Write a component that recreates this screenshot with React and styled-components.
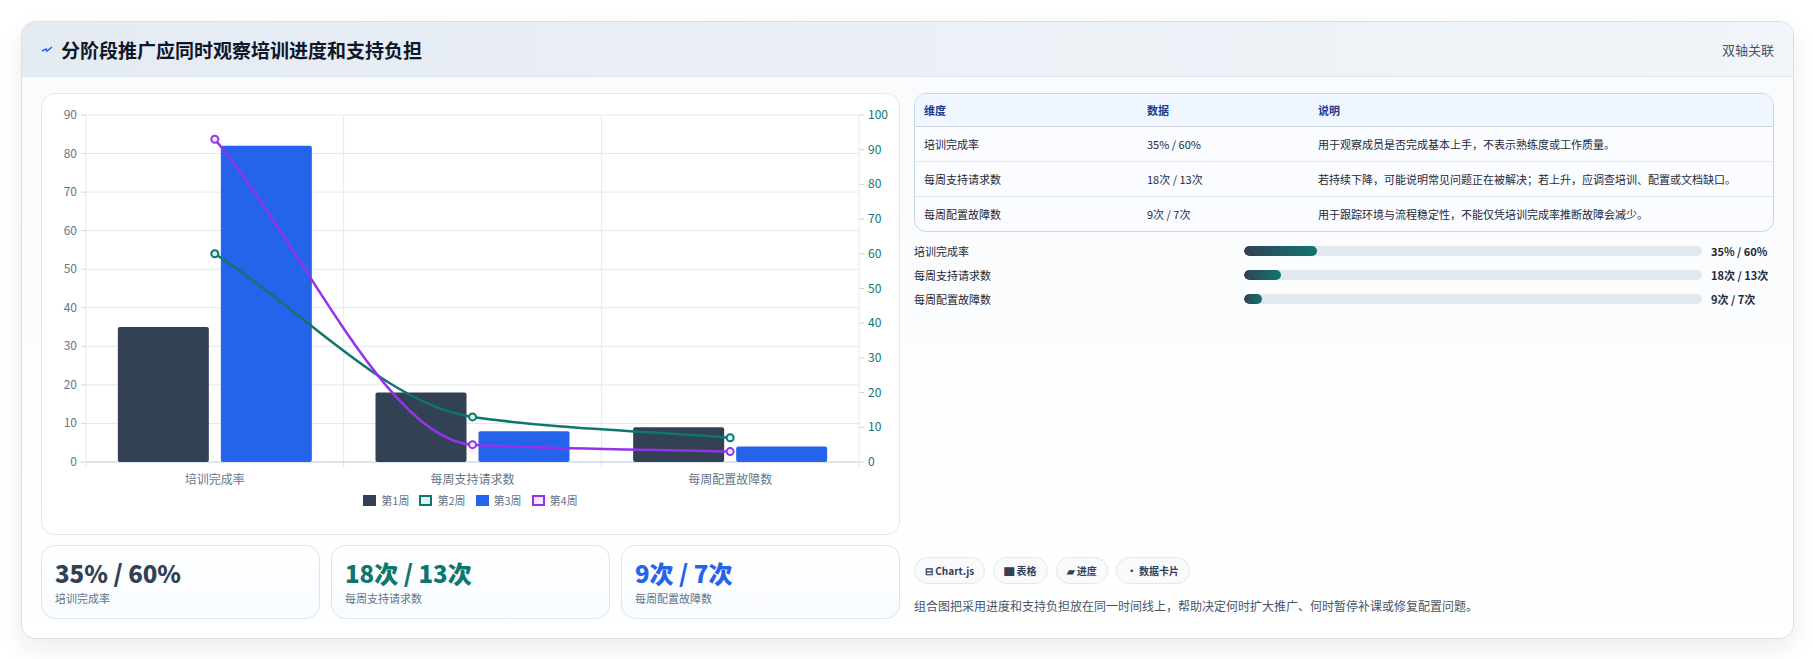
import React from 'react'
import styled, { createGlobalStyle } from 'styled-components'

const GlobalStyle = createGlobalStyle`
  body {
    margin: 0;
    background: #ffffff;
    font-family: "Noto Sans CJK SC", "Noto Sans", sans-serif;
    color: #1e293b;
  }
`

const left = { max: 90, ticks: [0, 10, 20, 30, 40, 50, 60, 70, 80, 90] }
const right = { max: 100, ticks: [0, 10, 20, 30, 40, 50, 60, 70, 80, 90, 100] }
const cats = ['培训完成率', '每周支持请求数', '每周配置故障数']
const week1 = [35, 18, 9]
const week3 = [82, 8, 4]
const week2 = [60, 13, 7]
const week4 = [93, 5, 3]

const rows = [
  { name: '培训完成率', value: '35% / 60%', note: '用于观察成员是否完成基本上手，不表示熟练度或工作质量。', pct: 16 },
  { name: '每周支持请求数', value: '18次 / 13次', note: '若持续下降，可能说明常见问题正在被解决；若上升，应调查培训、配置或文档缺口。', pct: 8 },
  { name: '每周配置故障数', value: '9次 / 7次', note: '用于跟踪环境与流程稳定性，不能仅凭培训完成率推断故障会减少。', pct: 4 },
]

const PL = 44
const PR = 817
const PT = 21
const PB = 368
const W = (PR - PL) / 3
const cx = (i) => PL + W * i + W / 2
const yl = (v) => PB - (v / left.max) * (PB - PT)
const yr = (v) => PB - (v / right.max) * (PB - PT)

// monotone cubic, so the lines never dip below their points
const smooth = (pts) => {
  const n = pts.length
  const d = []
  for (let i = 0; i < n - 1; i++) d.push((pts[i + 1][1] - pts[i][1]) / (pts[i + 1][0] - pts[i][0]))
  const m = pts.map((_, i) => {
    if (i === 0) return d[0]
    if (i === n - 1) return d[n - 2]
    if (d[i - 1] * d[i] <= 0) return 0
    return (2 * d[i - 1] * d[i]) / (d[i - 1] + d[i])
  })
  let path = `M${pts[0][0]},${pts[0][1]}`
  for (let i = 0; i < n - 1; i++) {
    const [x0, y0] = pts[i]
    const [x1, y1] = pts[i + 1]
    const h = (x1 - x0) / 3
    path += ` C${x0 + h},${y0 + m[i] * h} ${x1 - h},${y1 - m[i + 1] * h} ${x1},${y1}`
  }
  return path
}

const Chart = () => {
  const g2 = week2.map((v, i) => [cx(i), yr(v)])
  const g4 = week4.map((v, i) => [cx(i), yr(v)])
  return (
    <svg width="857" height="398" viewBox="0 0 857 398" style={{ display: 'block' }}>
      {left.ticks.map((t) => (
        <g key={t}>
          <line x1={PL} x2={PR} y1={yl(t)} y2={yl(t)} stroke="#e2e8f0" />
          <line x1={PL - 5} x2={PL} y1={yl(t)} y2={yl(t)} stroke="#cbd5e1" />
          <text x={PL - 9} y={yl(t) + 4} textAnchor="end" fontSize="12" fill="#64748b">{t}</text>
        </g>
      ))}
      {right.ticks.map((t) => (
        <g key={t}>
          <line x1={PR} x2={PR + 5} y1={yr(t)} y2={yr(t)} stroke="#cbd5e1" />
          <text x={PR + 9} y={yr(t) + 4} fontSize="12" fill="#0f766e">{t}</text>
        </g>
      ))}
      {[0, 1, 2, 3].map((i) => (
        <line key={i} x1={PL + W * i} x2={PL + W * i} y1={PT} y2={PB + 6} stroke="#e2e8f0" />
      ))}
      <line x1={PL} x2={PR} y1={PB} y2={PB} stroke="#cbd5e1" />
      {cats.map((c, i) => (
        <g key={c}>
          <rect x={cx(i) - 97} y={yl(week1[i])} width="91" height={PB - yl(week1[i])} rx="2" fill="#334155" />
          <rect x={cx(i) + 6} y={yl(week3[i])} width="91" height={PB - yl(week3[i])} rx="2" fill="#2563eb" />
          <text x={cx(i)} y={PB + 22} textAnchor="middle" fontSize="12" fill="#64748b">{c}</text>
        </g>
      ))}
      <path d={smooth(g2)} fill="none" stroke="#0f766e" strokeWidth="2.5" />
      <path d={smooth(g4)} fill="none" stroke="#9333ea" strokeWidth="2.5" />
      {g2.map(([x, y], i) => <circle key={'a' + i} cx={x} cy={y} r="3.5" fill="#ccfbf1" stroke="#0f766e" strokeWidth="2" />)}
      {g4.map(([x, y], i) => <circle key={'b' + i} cx={x} cy={y} r="3.5" fill="#f3e8ff" stroke="#9333ea" strokeWidth="2" />)}
    </svg>
  )
}

const legend = [
  { label: '第1周', fill: '#334155', border: '#334155' },
  { label: '第2周', fill: '#e0f2f1', border: '#0f766e' },
  { label: '第3周', fill: '#2563eb', border: '#2563eb' },
  { label: '第4周', fill: '#f3e8ff', border: '#9333ea' },
]

const App = () => (
  <>
    <GlobalStyle />
    <Page>
      <Card>
        <Header>
          <Title>
            <svg width="12" height="10" viewBox="0 0 12 10">
              <path d="M1 7 L5 5 L6 7 L11 3" fill="none" stroke="#2563eb" strokeWidth="1.6" />
            </svg>
            分阶段推广应同时观察培训进度和支持负担
          </Title>
          <Tag>双轴关联</Tag>
        </Header>
        <Body>
          <LeftCol>
            <ChartPanel>
              <Chart />
              <Legend>
                {legend.map((l) => (
                  <LegendItem key={l.label}>
                    <Swatch $fill={l.fill} $border={l.border} />
                    {l.label}
                  </LegendItem>
                ))}
              </Legend>
            </ChartPanel>
            <Kpis>
              <Kpi><KpiValue $color="#334155">35% / 60%</KpiValue><KpiLabel>培训完成率</KpiLabel></Kpi>
              <Kpi><KpiValue $color="#0f766e">18次 / 13次</KpiValue><KpiLabel>每周支持请求数</KpiLabel></Kpi>
              <Kpi><KpiValue $color="#2563eb">9次 / 7次</KpiValue><KpiLabel>每周配置故障数</KpiLabel></Kpi>
            </Kpis>
          </LeftCol>
          <RightCol>
            <Table>
              <thead>
                <tr><Th style={{ width: 205 }}>维度</Th><Th style={{ width: 153 }}>数据</Th><Th>说明</Th></tr>
              </thead>
              <tbody>
                {rows.map((r) => (
                  <tr key={r.name}><Td>{r.name}</Td><Td>{r.value}</Td><Td>{r.note}</Td></tr>
                ))}
              </tbody>
            </Table>
            <Bars>
              {rows.map((r) => (
                <BarRow key={r.name}>
                  <BarLabel>{r.name}</BarLabel>
                  <Track><Fill style={{ width: `${r.pct}%` }} /></Track>
                  <BarValue>{r.value}</BarValue>
                </BarRow>
              ))}
            </Bars>
            <Spacer />
            <Chips>
              <Chip>⊟ Chart.js</Chip>
              <Chip>▇ 表格</Chip>
              <Chip>▰ 进度</Chip>
              <Chip>• 数据卡片</Chip>
            </Chips>
            <Note>组合图把采用进度和支持负担放在同一时间线上，帮助决定何时扩大推广、何时暂停补课或修复配置问题。</Note>
          </RightCol>
        </Body>
      </Card>
    </Page>
  </>
)

const Page = styled.div`
  padding: 21px 21px 22px 21px;
`

const Card = styled.div`
  width: 1771px;
  height: 616px;
  border: 1px solid #d8dee8;
  border-radius: 14px;
  overflow: hidden;
  background: linear-gradient(180deg, #f8fafc, #ffffff);
  box-shadow: 0 10px 24px rgba(15, 23, 42, 0.08);
  display: flex;
  flex-direction: column;
`

const Header = styled.div`
  height: 54px;
  flex-shrink: 0;
  display: flex;
  align-items: center;
  justify-content: space-between;
  padding: 0 19px;
  background: linear-gradient(90deg, #e5ebf3, #f1f5f9);
  border-bottom: 1px solid #e2e8f0;
`

const Title = styled.h2`
  margin: 0;
  display: flex;
  align-items: center;
  gap: 8px;
  font-size: 19px;
  font-weight: 700;
  color: #0f172a;
`

const Tag = styled.span`
  font-size: 13px;
  color: #475569;
`

const Body = styled.div`
  flex: 1;
  display: flex;
  gap: 14px;
  padding: 16px 19px 18px;
`

const LeftCol = styled.div`
  width: 859px;
  display: flex;
  flex-direction: column;
  gap: 10px;
`

const ChartPanel = styled.div`
  height: 442px;
  box-sizing: border-box;
  border: 1px solid #e2e8f0;
  border-radius: 14px;
  background: #fff;
`

const Legend = styled.div`
  display: flex;
  justify-content: center;
  gap: 10px;
  font-size: 11px;
  color: #64748b;
`

const LegendItem = styled.span`
  display: flex;
  align-items: center;
  gap: 5px;
`

const Swatch = styled.span`
  width: 13px;
  height: 11px;
  box-sizing: border-box;
  background: ${(p) => p.$fill};
  border: 2px solid ${(p) => p.$border};
`

const Kpis = styled.div`
  display: grid;
  grid-template-columns: repeat(3, 1fr);
  gap: 11px;
`

const Kpi = styled.div`
  height: 74px;
  box-sizing: border-box;
  border: 1px solid #dbe4ef;
  border-radius: 14px;
  background: linear-gradient(180deg, #ffffff, #f8fbff);
  padding: 12px 13px;
`

const KpiValue = styled.div`
  font-size: 24px;
  font-weight: 800;
  line-height: 30px;
  color: ${(p) => p.$color};
`

const KpiLabel = styled.div`
  font-size: 11px;
  color: #64748b;
  margin-top: 2px;
`

const RightCol = styled.div`
  flex: 1;
  display: flex;
  flex-direction: column;
`

const Table = styled.table`
  width: 100%;
  border-collapse: separate;
  border-spacing: 0;
  border: 1px solid #cbd5e1;
  border-radius: 12px;
  overflow: hidden;
  font-size: 11px;
  background: #fafcff;
`

const Th = styled.th`
  text-align: left;
  font-weight: 600;
  color: #1e3a8a;
  background: #eff6ff;
  height: 32px;
  padding: 0 9px;
  border-bottom: 1px solid #cbd5e1;
`

const Td = styled.td`
  height: 34px;
  padding: 0 9px;
  color: #1e293b;
  border-bottom: 1px solid #e2e8f0;
  tr:last-child & {
    border-bottom: none;
  }
`

const Bars = styled.div`
  display: flex;
  flex-direction: column;
  gap: 7px;
  margin-top: 10px;
`

const BarRow = styled.div`
  display: grid;
  grid-template-columns: 330px 1fr 72px;
  align-items: center;
  height: 17px;
  font-size: 11px;
`

const BarLabel = styled.span`
  color: #1e293b;
`

const Track = styled.div`
  height: 10px;
  border-radius: 5px;
  background: #e2e8f0;
  overflow: hidden;
`

const Fill = styled.div`
  height: 100%;
  border-radius: 5px;
  background: linear-gradient(90deg, #334155, #0f766e);
`

const BarValue = styled.span`
  white-space: nowrap;
  font-weight: 700;
  color: #1e293b;
  padding-left: 9px;
`

const Spacer = styled.div`
  flex: 1;
`

const Chips = styled.div`
  display: flex;
  gap: 8px;
`

const Chip = styled.span`
  height: 27px;
  box-sizing: border-box;
  display: flex;
  align-items: center;
  padding: 0 10px;
  border: 1px solid #e2e8f0;
  border-radius: 14px;
  background: #f8fafc;
  font-size: 10px;
  font-weight: 700;
  color: #334155;
`

const Note = styled.p`
  margin: 13px 0 6px;
  font-size: 12px;
  color: #475569;
`

export default App
